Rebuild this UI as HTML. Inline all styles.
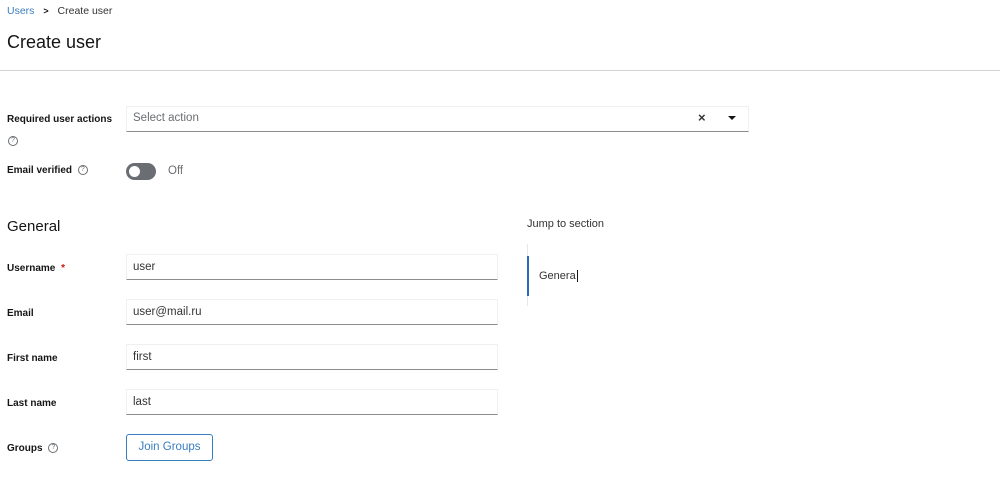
<!DOCTYPE html>
<html><head><style>
body{margin:0;background:#fff;font-family:"Liberation Sans",sans-serif;color:#151515;width:1000px;height:498px;overflow:hidden;position:relative}
.a{position:absolute}
.lbl{font-size:10px;font-weight:bold;color:#151515}
.inp{position:absolute;left:126px;width:372px;height:26px;border:1px solid #f0f0f0;border-bottom:1px solid #8a8d90;box-sizing:border-box;font-size:11.5px;color:#333;padding:6px 6px;line-height:13px}
.q{display:inline-block;width:8px;height:8px;border:1px solid #6a6e73;border-radius:50%;font-size:7px;line-height:8px;text-align:center;color:#6a6e73;font-weight:normal;vertical-align:middle}
</style></head><body>
<div class="a" style="left:7px;top:5px;font-size:10.5px"><span style="color:#3a7dbf">Users</span> <b style="margin:0 6px;font-size:9px">&gt;</b> <span style="color:#333">Create user</span></div>
<div class="a" style="left:7px;top:32px;font-size:18px">Create user</div>
<div class="a" style="left:0;top:70px;width:1000px;height:1px;background:#d2d2d2"></div>
<div class="a lbl" style="left:7px;top:114px">Required user actions</div>
<div class="a" style="left:8px;top:132px"><span class="q">?</span></div>
<div class="a" style="left:126px;top:106px;width:623px;height:26px;border:1px solid #f0f0f0;border-bottom:1px solid #8a8d90;box-sizing:border-box"></div>
<div class="a" style="left:133px;top:112px;font-size:11.5px;color:#6a6e73">Select action</div>
<div class="a" style="left:698px;top:110px;font-size:13px;font-weight:bold;color:#333">×</div>
<div class="a" style="left:728px;top:116px;width:0;height:0;border-left:4px solid transparent;border-right:4px solid transparent;border-top:4px solid #151515"></div>
<div class="a lbl" style="left:7px;top:165px">Email verified <span class="q" style="margin-left:3px">?</span></div>
<div class="a" style="left:126px;top:163px;width:30px;height:17px;border-radius:9px;background:#6a6e73"></div>
<div class="a" style="left:129px;top:166px;width:11px;height:11px;border-radius:50%;background:#fff"></div>
<div class="a" style="left:168px;top:165px;font-size:11.5px;color:#6a6e73">Off</div>
<div class="a" style="left:7px;top:218px;font-size:15px">General</div>
<div class="a lbl" style="left:7px;top:263px">Username <span style="color:#c9190b;margin-left:3px">*</span></div>
<div class="inp" style="top:254px">user</div>
<div class="a lbl" style="left:7px;top:308px">Email</div>
<div class="inp" style="top:299px">user@mail.ru</div>
<div class="a lbl" style="left:7px;top:353px">First name</div>
<div class="inp" style="top:344px">first</div>
<div class="a lbl" style="left:7px;top:398px">Last name</div>
<div class="inp" style="top:389px">last</div>
<div class="a lbl" style="left:7px;top:443px">Groups <span class="q" style="margin-left:3px">?</span></div>
<div class="a" style="left:126px;top:434px;width:87px;height:27px;border:1px solid #3a7dbf;border-radius:3px;box-sizing:border-box;font-size:11.5px;color:#3a7dbf;text-align:center;line-height:25px">Join Groups</div>
<div class="a" style="left:527px;top:218px;font-size:11px;color:#333">Jump to section</div>
<div class="a" style="left:527px;top:244px;width:1px;height:62px;background:#e8e8e8"></div>
<div class="a" style="left:527px;top:256px;width:2px;height:40px;background:#2b6cb8"></div>
<div class="a" style="left:539px;top:270px;font-size:11px;color:#333">Genera<span style="border-left:1px solid #151515;margin-left:1px"></span></div>
</body></html>
